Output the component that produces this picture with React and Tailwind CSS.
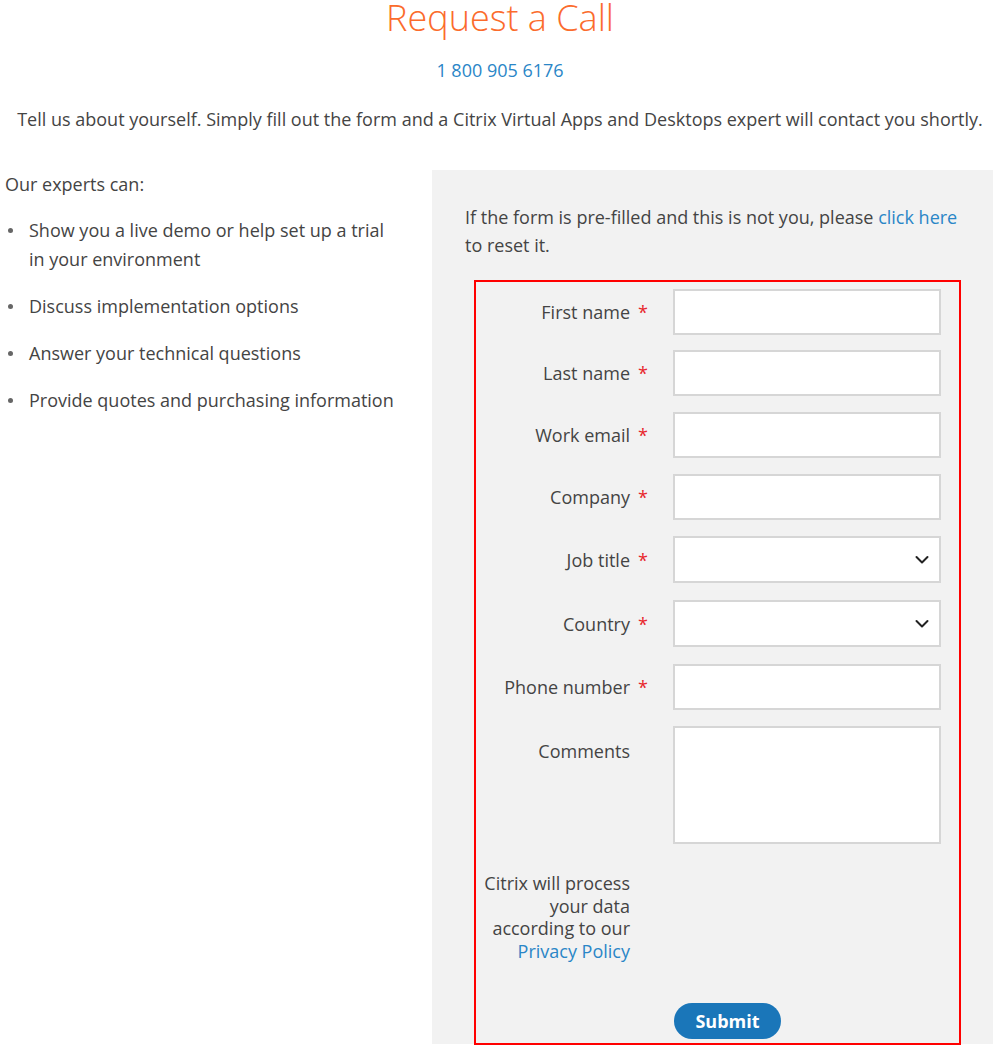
import React from "react";

function Chevron() {
  return (
    <svg width="14" height="9" viewBox="0 0 14 9" className="absolute right-[10px] top-1/2 -translate-y-1/2">
      <polyline points="1.5,1.5 7,7 12.5,1.5" fill="none" stroke="#222" strokeWidth="2" strokeLinecap="round" strokeLinejoin="round" />
    </svg>
  );
}

function Row({ label, required = true, select = false, className = "" }) {
  return (
    <div className={"flex items-center " + className}>
      <div className="w-[154px] text-right text-[#444] leading-[24px]">{label}</div>
      <div className="w-[43px] pl-[8px] text-[#e8262b] leading-[24px]">{required ? "*" : ""}</div>
      <div className={"relative w-[268px] bg-white border-2 border-[#d6d6d6] " + (select ? "h-[47px]" : "h-[46px]")}>
        {select && <Chevron />}
      </div>
    </div>
  );
}

export default function App() {
  return (
    <div
      className="w-[1000px] h-[1054px] bg-white text-[18px] text-[#444] overflow-hidden"
      style={{ fontFamily: '"Open Sans", "Noto Sans", sans-serif' }}
    >
      <h1 className="text-center text-[36px] leading-[36px] font-light text-[#fb6b2c]">Request a Call</h1>
      <p className="mt-[22px] text-center leading-[24px] text-[#2a86c7]">1 800 905 6176</p>
      <p className="mt-[25px] text-center leading-[24px] text-[#444]">
        Tell us about yourself. Simply fill out the form and a Citrix Virtual Apps and Desktops expert will contact you shortly.
      </p>

      <div className="mt-[39px] flex">
        <div className="w-[432px] pl-[5px]">
          <p className="leading-[29px]">Our experts can:</p>
          <ul className="mt-[17px] flex flex-col gap-[18px]">
            {[
              "Show you a live demo or help set up a trial in your environment",
              "Discuss implementation options",
              "Answer your technical questions",
              "Provide quotes and purchasing information",
            ].map((t) => (
              <li key={t} className="flex leading-[29px]">
                <span className="w-[24px] shrink-0 h-[29px] flex items-center pl-[3px]">
                  <span className="block w-[5px] h-[5px] rounded-full bg-[#666]" />
                </span>
                <span className="w-[375px]">{t}</span>
              </li>
            ))}
          </ul>
        </div>

        <div className="w-[561px] h-[874px] bg-[#f2f2f2] pt-[33px]">
          <p className="pl-[33px] pr-[30px] leading-[28px]">
            If the form is pre-filled and this is not you, please{" "}
            <span className="text-[#2a86c7]">click here</span> to reset it.
          </p>
          <div className="ml-[42px] mt-[21px] w-[487px] border-2 border-[#ff0000] pt-[7px] pb-[4px]">
            <div className="flex flex-col">
              <Row label="First name" />
              <Row label="Last name" className="mt-[15px]" />
              <Row label="Work email" className="mt-[16px]" />
              <Row label="Company" className="mt-[16px]" />
              <Row label="Job title" select className="mt-[16px]" />
              <Row label="Country" select className="mt-[17px]" />
              <Row label="Phone number" className="mt-[17px]" />
              <div className="flex items-start mt-[16px]">
                <div className="w-[154px] text-right leading-[24px] mt-[13px]">Comments</div>
                <div className="w-[43px]" />
                <div className="w-[268px] h-[118px] bg-white border-2 border-[#d6d6d6]" />
              </div>
            </div>
            <div className="mt-[28px] w-[154px] text-right leading-[22.7px]">
              Citrix will process your data according to our{" "}
              <span className="text-[#2a86c7]">Privacy Policy</span>
            </div>
            <div className="mt-[40px] pl-[198px]">
              <button className="w-[107px] h-[36px] rounded-full bg-[#1a76b9] text-white font-bold text-[18px] leading-[36px]">
                Submit
              </button>
            </div>
          </div>
        </div>
      </div>
    </div>
  );
}
